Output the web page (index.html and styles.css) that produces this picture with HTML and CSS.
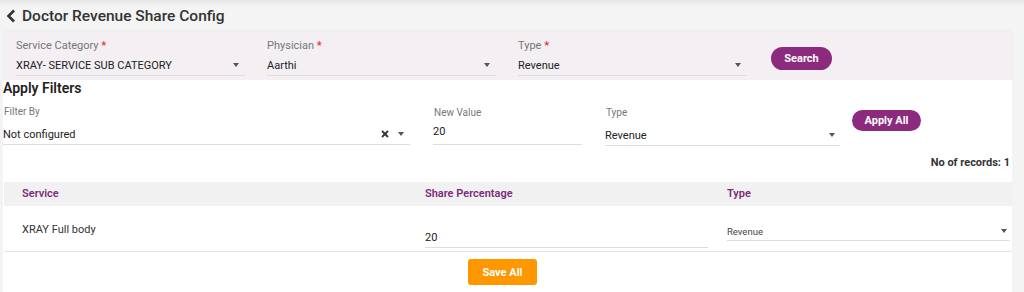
FILE: index.html
```html
<!DOCTYPE html>
<html lang="en">

<head>
    <meta charset="UTF-8">
    <meta name="viewport" content="width=device-width, initial-scale=1.0">
    <title>Doctor Revenue Share Config</title>
    <link rel="stylesheet" href="styles.css">
</head>

<body>
    <div class="page">
        <!-- Page title -->
        <div class="page-header">
            <svg class="back" width="10" height="14" viewBox="0 0 10 14">
                <polyline points="8,1.5 2.5,7 8,12.5" />
            </svg>
            <h1>Doctor Revenue Share Config</h1>
        </div>

        <!-- Search criteria -->
        <div class="search-card">
            <div class="field">
                <label>Service Category <span class="req">*</span></label>
                <div class="select"><span>XRAY- SERVICE SUB CATEGORY</span><i class="caret"></i></div>
            </div>
            <div class="field">
                <label>Physician <span class="req">*</span></label>
                <div class="select"><span>Aarthi</span><i class="caret"></i></div>
            </div>
            <div class="field">
                <label>Type <span class="req">*</span></label>
                <div class="select"><span>Revenue</span><i class="caret"></i></div>
            </div>
            <button class="btn btn-purple btn-search">Search</button>
        </div>

        <div class="panel">
            <h2>Apply Filters</h2>
            <div class="filter-row">
                <div class="field f-filter">
                    <label>Filter By</label>
                    <div class="select">
                        <span>Not configured</span>
                        <svg class="clear" width="8" height="8" viewBox="0 0 8 8">
                            <line x1="1" y1="1" x2="7" y2="7" />
                            <line x1="7" y1="1" x2="1" y2="7" />
                        </svg>
                        <i class="caret"></i>
                    </div>
                </div>
                <div class="field f-value">
                    <label>New Value</label>
                    <div class="select"><span>20</span></div>
                </div>
                <div class="field f-type">
                    <label>Type</label>
                    <div class="select"><span>Revenue</span><i class="caret"></i></div>
                </div>
                <button class="btn btn-purple btn-apply">Apply All</button>
            </div>

            <div class="records">No of records: 1</div>

            <div class="table">
                <div class="th">Service</div>
                <div class="th">Share Percentage</div>
                <div class="th">Type</div>

                <div class="td td-name">XRAY Full body</div>
                <div class="td td-input">
                    <div class="select"><span>20</span></div>
                </div>
                <div class="td td-type">
                    <div class="select small"><span>Revenue</span><i class="caret"></i></div>
                </div>
            </div>

            <div class="footer">
                <button class="btn btn-orange">Save All</button>
            </div>
        </div>
    </div>
</body>

</html>
```

FILE: styles.css
```css
/* General styles */
body {
    margin: 0;
    font-family: Roboto, "Liberation Sans", sans-serif;
    background-color: #f4f4f4;
    color: #222;
    height: 292px;
    overflow: hidden;
}

.page {
    padding: 0 12px 0 3px;
    box-shadow: inset 0 5px 5px -3px rgba(0, 0, 0, 0.08);
    min-height: 292px;
    box-sizing: border-box;
}

.page-header {
    height: 31px;
    display: flex;
    align-items: center;
}

.back {
    margin-left: 3px;
    fill: none;
    stroke: #333;
    stroke-width: 2.6;
}

.page-header h1 {
    margin: 0 0 0 6px;
    font-size: 15.5px;
    font-weight: 500;
    color: #333;
}

/* Search card */
.search-card {
    margin-left: 1px;
    height: 49px;
    box-sizing: border-box;
    background-color: #f3eff3;
    box-shadow: 0 0 3px rgba(0, 0, 0, 0.06);
    padding: 8px 0 0 12px;
    display: grid;
    grid-template-columns: 229px 229px 229px auto;
    column-gap: 22px;
    align-items: start;
}

.field label {
    display: block;
    font-size: 11px;
    line-height: 14px;
    color: #777;
}

.req {
    color: #e53935;
    font-weight: 700;
}

.select {
    display: flex;
    align-items: center;
    height: 20px;
    margin-top: 2px;
    border-bottom: 1px solid #ddd;
    font-size: 11px;
    color: #222;
}

.select span {
    flex: 1;
}

.caret {
    width: 0;
    height: 0;
    border-left: 3.5px solid transparent;
    border-right: 3.5px solid transparent;
    border-top: 4px solid #555;
    margin-right: 6px;
}

.btn {
    border: none;
    color: #fff;
    font-family: Roboto, "Liberation Sans", sans-serif;
    font-weight: 700;
    font-size: 11px;
    cursor: pointer;
}

.btn-purple {
    background-color: #8c2a7e;
    border-radius: 12px;
}

.btn-search {
    width: 61px;
    height: 23px;
    margin: 8px 0 0 2px;
}

/* Filters panel */
.panel {
    background-color: #fff;
    height: 212px;
}

.panel h2 {
    margin: 0;
    font-size: 14px;
    line-height: 16px;
    font-weight: 600;
    color: #222;
}

.filter-row {
    display: flex;
    align-items: flex-start;
    gap: 23px;
    margin-top: 9px;
}

.filter-row .field label {
    font-size: 10px;
    padding-left: 1px;
}

.filter-row .select {
    margin-top: 3px;
    padding-top: 2px;
}

.f-filter {
    width: 407px;
}

.f-value {
    width: 149px;
    margin-top: 1px;
}

.f-value .select {
    margin-top: 1px;
    padding-top: 0;
    padding-bottom: 3px;
}

.f-type {
    width: 235px;
    margin-top: 1px;
}

.f-type .caret {
    margin-right: 5px;
}

.clear {
    stroke: #333;
    stroke-width: 1.8;
    margin-right: 9px;
}

.btn-apply {
    width: 69px;
    height: 21px;
    margin: 5px 0 0 -11px;
    border-radius: 11px;
}

.records {
    text-align: right;
    font-size: 11px;
    font-weight: 700;
    color: #333;
    padding-right: 2px;
    margin-top: 10px;
}

/* Table */
.table {
    margin: 13px 0 0 1px;
    display: grid;
    grid-template-columns: 403px 302px auto;
}

.th {
    background-color: #f1f1f1;
    height: 24px;
    line-height: 24px;
    padding-left: 18px;
    font-size: 11px;
    font-weight: 600;
    color: #7d2b7d;
}

.td {
    height: 46px;
    box-sizing: border-box;
    border-bottom: 1px solid #e2e2e2;
    padding-left: 18px;
}

.td-name {
    padding-top: 17px;
    font-size: 11px;
    line-height: 14px;
    color: #333;
}

.td-input {
    padding: 21px 1px 0 18px;
}

.td-input .select {
    margin-top: 0;
}

.td-type {
    padding: 16px 2px 0 18px;
}

.select.small {
    margin-top: 0;
    height: 18px;
    font-size: 9.5px;
    color: #444;
}

.select.small .caret {
    margin-right: 3px;
}

.footer {
    display: flex;
    justify-content: center;
    padding: 7px 10px 0 0;
}

.btn-orange {
    background-color: #ff9800;
    border-radius: 3px;
    width: 69px;
    height: 26px;
}
```
